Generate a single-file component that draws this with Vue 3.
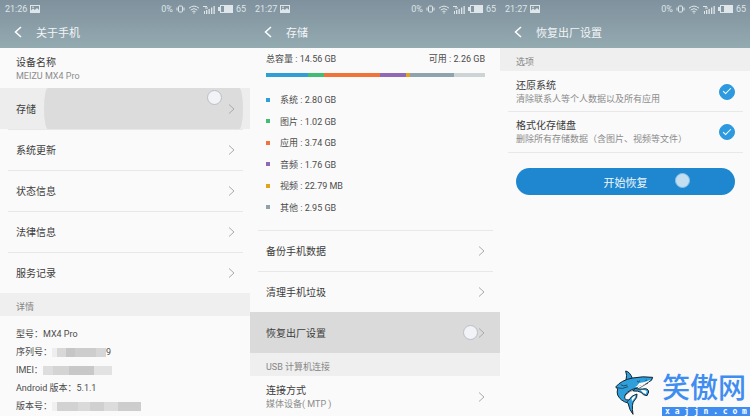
<script setup>
import { ref } from 'vue'

const screens = [
  { id: 'about', time: '21:26', title: '关于手机' },
  { id: 'storage', time: '21:27', title: '存储' },
  { id: 'reset', time: '21:27', title: '恢复出厂设置' }
]

const aboutRows = ['系统更新', '状态信息', '法律信息', '服务记录']

const usage = [
  { name: '系统', size: '2.80 GB', share: 42, color: '#2f9fd6' },
  { name: '图片', size: '1.02 GB', share: 16, color: '#43bd74' },
  { name: '应用', size: '3.74 GB', share: 56, color: '#f0743a' },
  { name: '音频', size: '1.76 GB', share: 26, color: '#9068b8' },
  { name: '视频', size: '22.79 MB', share: 4, color: '#dfa51e' },
  { name: '其他', size: '2.95 GB', share: 44, color: '#8fa3ad' }
]

const options = ref([
  { id: 'system', title: '还原系统', note: '清除联系人等个人数据以及所有应用', checked: true },
  { id: 'disk', title: '格式化存储盘', note: '删除所有存储数据（含图片、视频等文件）', checked: true }
])
</script>

<template>
  <main class="screens">
    <section v-for="screen in screens" :key="screen.id" class="screen">
      <header class="header">
        <div class="status">
          <span>{{ screen.time }}</span>
          <svg class="picture" viewBox="0 0 10 8" width="10" height="8" aria-hidden="true">
            <path fill-rule="evenodd" d="M0 0h10v8H0zM1 1v4.600l2-2 1.800 1.300L7 3l2 2V1z" />
            <circle cx="3" cy="2.300" r=".8" />
          </svg>
          <span class="percent">0%</span>
          <svg viewBox="0 0 9 8" width="9" height="8" class="line" aria-hidden="true">
            <rect x="2.500" y="1" width="4" height="6" rx="1" />
            <path d="M1 2.500v3M8 2.500v3" />
          </svg>
          <svg viewBox="0 0 12 9" width="12" height="9" class="line wifi" aria-hidden="true">
            <path d="M1 3.200q5-4.200 10 0M2.700 5q3.300-2.700 6.600 0M4.400 6.700q1.600-1.300 3.200 0" />
            <path d="M5.300 8h1.400" />
          </svg>
          <svg viewBox="0 0 12 9" width="12" height="9" aria-hidden="true">
            <path d="M1 6h1v3H1zM3 5h1.300v4H3zM5.500 4h1.300v5H5.500zM8 2.500h1.300V9H8zM10.500 1h1.300v8h-1.300zM0 1h4v1H0zM2 2.600h3v1H2z" />
          </svg>
          <svg viewBox="0 0 15 8" width="15" height="8" aria-hidden="true">
            <path fill-rule="evenodd" d="M2 0h13v8H2V6H0V2h2zM3 1v6h3V1z" />
          </svg>
          <span>65</span>
        </div>
        <div class="title">
          <button class="back" type="button" aria-label="返回">
            <svg viewBox="0 0 8 12" width="8" height="12"><path d="M7 1 1.500 6 7 11" /></svg>
          </button>
          <h1>{{ screen.title }}</h1>
        </div>
      </header>

      <template v-if="screen.id === 'about'">
        <div class="row plain">
          <span class="label">设备名称<small>MEIZU MX4 Pro</small></span>
        </div>
        <button class="row pressed-partial" type="button">
          <span class="ripple"></span>
          <span class="label">存储</span>
          <svg class="chevron" viewBox="0 0 7 10" width="7" height="10"><path d="M1 .5 6 5 1 9.500" /></svg>
          <span class="touch"></span>
        </button>
        <button v-for="row in aboutRows" :key="row" class="row" type="button">
          <span class="label">{{ row }}</span>
          <svg class="chevron" viewBox="0 0 7 10" width="7" height="10"><path d="M1 .5 6 5 1 9.500" /></svg>
        </button>
        <h2 class="group">详情</h2>
        <ul class="details">
          <li>型号：MX4 Pro</li>
          <li>序列号：<span class="mask serial"></span>9</li>
          <li>IMEI：<span class="mask imei"></span></li>
          <li>Android 版本：5.1.1</li>
          <li>版本号：<span class="mask build"></span></li>
        </ul>
      </template>

      <template v-else-if="screen.id === 'storage'">
        <div class="capacity">
          <div class="totals"><span>总容量 : 14.56 GB</span><span>可用 : 2.26 GB</span></div>
          <div class="bar">
            <span v-for="item in usage" :key="item.name" :style="{ flexGrow: item.share, background: item.color }"></span>
            <span class="free"></span>
          </div>
          <ul class="legend">
            <li v-for="item in usage" :key="item.name">
              <i :style="{ background: item.color }"></i>{{ item.name }} : {{ item.size }}
            </li>
          </ul>
        </div>
        <button v-for="row in ['备份手机数据', '清理手机垃圾']" :key="row" class="row" type="button">
          <span class="label">{{ row }}</span>
          <svg class="chevron" viewBox="0 0 7 10" width="7" height="10"><path d="M1 .5 6 5 1 9.500" /></svg>
        </button>
        <button class="row pressed" type="button">
          <span class="label">恢复出厂设置</span>
          <svg class="chevron" viewBox="0 0 7 10" width="7" height="10"><path d="M1 .5 6 5 1 9.500" /></svg>
          <span class="touch"></span>
        </button>
        <h2 class="group">USB 计算机连接</h2>
        <button class="row plain" type="button">
          <span class="label">连接方式<small>媒体设备( MTP )</small></span>
          <svg class="chevron" viewBox="0 0 7 10" width="7" height="10"><path d="M1 .5 6 5 1 9.500" /></svg>
        </button>
      </template>

      <template v-else>
        <h2 class="group">选项</h2>
        <label v-for="(option, index) in options" :key="option.id" class="row" :class="{ plain: index === 0 }" :for="option.id">
          <span class="label">{{ option.title }}<small>{{ option.note }}</small></span>
          <input :id="option.id" v-model="option.checked" type="checkbox">
        </label>
        <div class="action">
          <button class="start" type="button">开始恢复<span class="touch"></span></button>
        </div>
      </template>
    </section>

    <aside class="brand">
      <svg viewBox="28 22 120 141" width="40" height="47" aria-hidden="true">
        <path class="belly outline" d="M60 102Q76 84 96 84L130 64 96 72 70 80Z" />
        <path class="skin" d="M63 28Q76 30 84 52L64 56Q68 40 63 28Z" />
        <path class="skin" d="M90 80Q104 84 114 82Q131 78 132 91L127 102Q115 101 109 92Q100 87 86 88Z" />
        <path class="skin" d="M33 76Q50 55 84 49Q115 43 144 47Q144 57 130 62Q116 66 102 72L97 79Q80 82 68 92Q58 100 60 110Q63 116 73 115Q80 101 97 97Q99 108 88 118Q80 126 85 158Q74 145 70 124Q47 118 39 100Q36 91 39 82Z" />
        <path class="belly" d="M138 54Q124 61 104 64Q98 73 92 76L99 77 105 72Q125 68 138 54ZM108 86Q118 84 126 88L124 97Q116 96 108 86ZM81 110Q87 102 93 101Q92 110 82 119Z" />
        <path class="ink" d="M35 78Q54 84 70 75M48 69Q56 76 68 70M97 58Q102 64 106 57M72 116 67 121M122 56l5-1" />
      </svg>
      <div class="brand-text">
        <strong>笑傲网</strong>
        <span>x a j j n . c o m</span>
      </div>
    </aside>
  </main>
</template>

<style>
body {
  margin: 0;
  background: #fafafa;
}
</style>

<style scoped>
.screens {
  position: relative;
  display: flex;
  min-height: 100vh;
  overflow: hidden;
  color: #4c4c4c;
  font-family: Roboto, "Noto Sans CJK SC", sans-serif;
  font-size: 9px;
}
.screen {
  flex: 1 1 0;
  min-width: 0;
}
button {
  padding: 0;
  border: 0;
  background: none;
  color: inherit;
  font: inherit;
  cursor: pointer;
}
h1, h2, ul {
  margin: 0;
  padding: 0;
  font-weight: 400;
  list-style: none;
}

/* header */
.header {
  height: 48px;
  background: linear-gradient(#7f919d, #94aab1);
  color: #dfe6e9;
}
.status {
  display: flex;
  align-items: center;
  gap: 3px;
  height: 18px;
  padding: 0 4px 0 5px;
}
.status svg {
  fill: currentColor;
}
.status .line {
  fill: none;
  stroke: currentColor;
}
.percent {
  margin-left: auto;
}
.title {
  display: flex;
  align-items: center;
  gap: 14px;
  height: 28px;
  padding-left: 14px;
}
.back {
  display: flex;
}
.back path {
  fill: none;
  stroke: #fff;
  stroke-width: 1.5;
}
h1 {
  font-size: 11px;
  color: #f2f5f6;
}

/* list rows */
.row {
  position: relative;
  display: flex;
  align-items: center;
  justify-content: space-between;
  box-sizing: border-box;
  width: 100%;
  height: 41px;
  padding: 1px 15px 0 16px;
  text-align: left;
}
.row::before {
  content: "";
  position: absolute;
  inset: 0 7px auto 8px;
  height: 1px;
  background: #e8e8e8;
}
.plain::before,
.pressed::before,
.pressed-partial::before {
  display: none;
}
.plain {
  height: 40px;
}
.label {
  position: relative;
  font-size: 10px;
  line-height: 15px;
  color: #3c3c3c;
}
small {
  display: block;
  font-size: 9px;
  line-height: 13px;
  color: #8c8c8c;
  white-space: nowrap;
}
.chevron {
  position: relative;
  flex: none;
}
.chevron path {
  fill: none;
  stroke: #aaa;
}
.pressed {
  background: #dadada;
}
.pressed-partial {
  background: #ededed;
}
.ripple {
  position: absolute;
  inset: 0 7px 0 44px;
  border-radius: 4px / 20px;
  background: #dcdcdc;
}
.touch {
  position: absolute;
  box-sizing: border-box;
  width: 15px;
  height: 15px;
  border: 1px solid #b9bfc8;
  border-radius: 50%;
  background: #f1f3f6;
}
.pressed-partial .touch {
  top: 2px;
  right: 28px;
}
.pressed .touch {
  top: 13px;
  right: 22px;
}
.group {
  height: 23px;
  padding-left: 16px;
  background: #efefef;
  color: #858585;
  font-size: 9px;
  line-height: 28px;
}
.details {
  padding: 9px 16px 0;
  line-height: 18px;
}
.mask {
  display: inline-block;
  height: 9px;
  vertical-align: middle;
}
.serial {
  width: 54px;
  background: linear-gradient(90deg, #eee 0 5px, #d8d8d8 5px 14px, #c6c6c6 14px 23px, #cdcdcd 23px 44px, #d6d6d6 44px);
}
.imei {
  width: 69px;
  background: linear-gradient(90deg, #ddd 0 10px, #d4d4d4 10px 26px, #c8c8c8 26px 51px, #e2e2e2 51px);
}
.build {
  width: 89px;
  background: linear-gradient(90deg, #f0f0f0 0 5px, #d2d2d2 5px 26px, #dadada 26px 38px, #d0d0d0 38px 52px, #dcdcdc 52px 66px, #cdcdcd 66px);
}

/* storage usage */
.capacity {
  padding: 5px 15px 12px 16px;
}
.totals {
  display: flex;
  justify-content: space-between;
  line-height: 12px;
}
.bar {
  display: flex;
  height: 4px;
  margin: 8px 0 12px;
}
.bar .free {
  flex-grow: 31;
  background: #ccd4d5;
}
.legend {
  display: grid;
  grid-auto-rows: 1fr;
  height: 129px;
}
.legend li {
  display: flex;
  align-items: center;
  white-space: pre;
}
.legend i {
  width: 4px;
  height: 4px;
  margin-right: 10px;
}

/* reset options */
input {
  flex: none;
  display: grid;
  place-items: center;
  width: 16px;
  height: 16px;
  margin: 0;
  border: 1px solid #2d9ae0;
  border-radius: 50%;
  appearance: none;
}
input:checked {
  background: #2d9ae0;
}
input:checked::after {
  content: "";
  width: 7px;
  height: 3px;
  margin-bottom: 3px;
  border: solid #fff;
  border-width: 0 0 1px 1px;
  transform: rotate(-45deg);
}
.action {
  position: relative;
  padding: 16px 15px 0 16px;
}
.action::before {
  content: "";
  position: absolute;
  inset: 0 7px auto 8px;
  height: 1px;
  background: #e8e8e8;
}
.start {
  position: relative;
  width: 100%;
  height: 27px;
  border-radius: 14px;
  background: #1f87cf;
  color: #f0f7fc;
  font-size: 11px;
}
.start .touch {
  top: 5px;
  right: 45px;
  border-color: #86c0e8;
  background: #c3def1;
}

/* site mark */
.brand {
  position: absolute;
  right: 0;
  bottom: 0;
  display: flex;
  align-items: flex-end;
  gap: 8px;
}
.skin {
  fill: #2f9fdc;
  stroke: #14222e;
  stroke-width: 3;
  stroke-linejoin: round;
}
.belly {
  fill: #fff;
}
.outline {
  stroke: #14222e;
  stroke-width: 2;
}
.ink {
  fill: none;
  stroke: #14222e;
  stroke-width: 2;
}
.brand-text {
  display: flex;
  flex-direction: column;
  width: 88px;
  color: #3f8df0;
}
.brand-text strong {
  font-size: 28px;
  font-weight: 500;
  line-height: 36px;
  white-space: nowrap;
}
.brand-text span {
  background: #3f8df0;
  color: #fff;
  font: bold 8px/9px "DejaVu Sans Mono", monospace;
  text-align: center;
  white-space: nowrap;
}
</style>
